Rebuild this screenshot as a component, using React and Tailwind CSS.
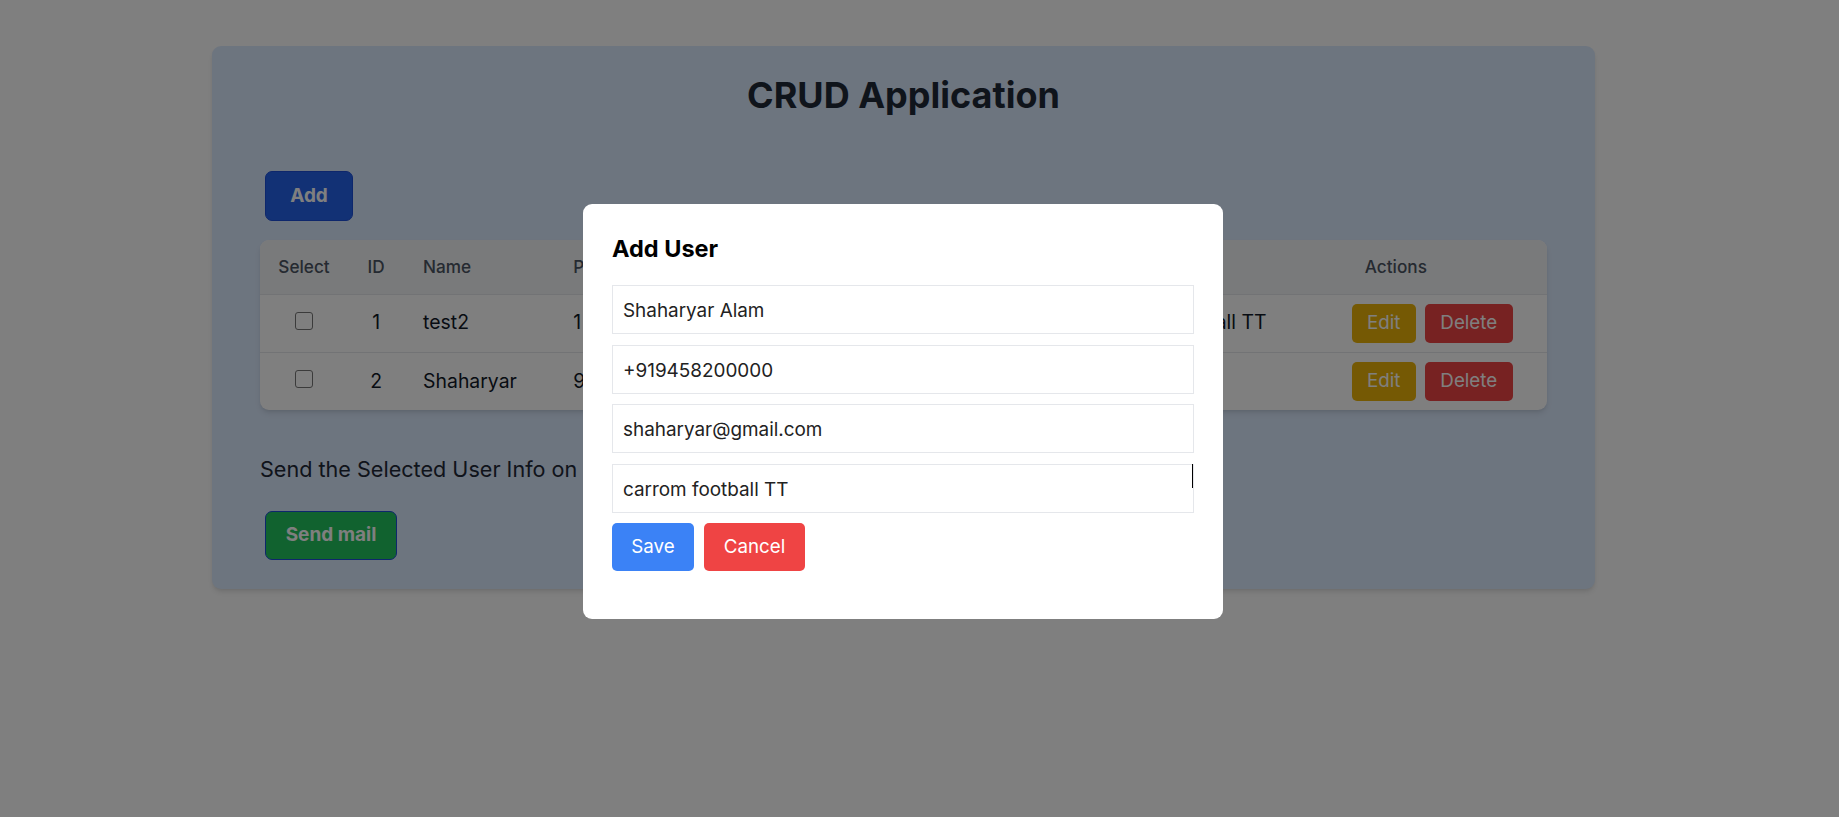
import React from "react";

const rows = [
  { id: 1, name: "test2", phone: "1 234567890", email: "test2@gmail.com", hobbies: "carrom football TT" },
  { id: 2, name: "Shaharyar", phone: "9458200000", email: "shaharyar@gmail.com", hobbies: "cricket" },
];

function Checkbox() {
  return <span className="inline-block w-[18px] h-[18px] rounded-[3px] border border-[#767676] bg-white align-middle -translate-y-[3px]"></span>;
}

export default function App() {
  return (
    <div className="min-h-[817px] bg-white text-[#1f2937]" style={{ fontFamily: "Inter, 'Noto Sans', sans-serif" }}>
      <div className="pt-[46px] pl-[212px]">
        <div className="w-[1383px] h-[543px] rounded-[9px] bg-[#dbeafe] shadow-md px-[48px] pt-[28px]">
          <h1 className="text-center text-[36px] leading-[42px] font-bold text-[#1f2937]">CRUD Application</h1>
          <div className="mt-[50px]">
            <button className="m-[5px] w-[88px] h-[50px] rounded-[7px] border border-[#1d4ed8] bg-[#2563eb] text-white font-bold text-[19px]">Add</button>
          </div>
          <div className="mt-[14px] rounded-[9px] shadow-md overflow-hidden bg-white">
            <table className="w-full table-fixed border-collapse">
              <thead>
                <tr className="bg-[#f3f4f6] h-[54px] text-[17.2px] font-medium text-[#4b5563]">
                  <th className="w-[88px] text-center font-medium">Select</th>
                  <th className="w-[56px] text-center font-medium">ID</th>
                  <th className="w-[150px] text-left pl-[19px] font-medium">Name</th>
                  <th className="w-[206px] text-left pl-[19px] font-medium">Phone</th>
                  <th className="w-[317px] text-left pl-[19px] font-medium">Email</th>
                  <th className="w-[255px] text-left pl-[19px] font-medium">Hobbies</th>
                  <th className="w-[214px] text-left pl-[32px] font-medium">Actions</th>
                </tr>
              </thead>
              <tbody className="text-[19.4px] text-[#111827]">
                {rows.map((r) => (
                  <tr key={r.id} className="h-[58px] border-t border-[#e5e7eb]">
                    <td className="text-center"><Checkbox /></td>
                    <td className="text-center">{r.id}</td>
                    <td className="pl-[19px]">{r.name}</td>
                    <td className="pl-[19px] whitespace-nowrap">{r.phone}</td>
                    <td className="pl-[19px]">{r.email}</td>
                    <td className="pl-[19px] whitespace-nowrap">{r.hobbies}</td>
                    <td className="pl-[19px]">
                      <div className="flex gap-[9px]">
                        <button className="w-[64px] h-[39px] rounded-[5px] bg-[#eab308] text-white text-[18.75px]">Edit</button>
                        <button className="w-[88px] h-[39px] rounded-[5px] bg-[#ef4444] text-white text-[18.75px]">Delete</button>
                      </div>
                    </td>
                  </tr>
                ))}
              </tbody>
            </table>
          </div>
          <p className="mt-[43px] text-[21.6px] leading-[33px] text-[#1f2937]">Send the Selected User Info on Email</p>
          <div className="mt-[20px]">
            <button className="m-[5px] w-[132px] h-[49px] rounded-[7px] border border-[#1d4ed8] bg-[#22c55e] text-white font-bold text-[19px]">Send mail</button>
          </div>
        </div>
      </div>

      <div className="fixed inset-0 bg-black/50 flex justify-center items-start pt-[204px] pr-[33px]">
        <div className="w-[640px] h-[415px] bg-white rounded-[9px] px-[29px] pt-[28px]">
          <h2 className="text-[23.5px] leading-[33px] font-bold text-black">Add User</h2>
          <div className="mt-[20px] flex flex-col gap-[10.7px]">
            {["Shaharyar Alam", "+919458200000", "shaharyar@gmail.com", "carrom football TT"].map((v, i) => (
              <div key={i} className="relative">
                <div className="h-[49px] w-full border border-[#e5e7eb] px-[10px] pt-[3px] flex items-center text-[18.9px] text-[#222]">{v}</div>
                {i === 3 && <span className="absolute right-[1px] top-0 w-[1.5px] h-[24px] bg-black"></span>}
              </div>
            ))}
          </div>
          <div className="mt-[9.7px] flex gap-[10px]">
            <button className="w-[82px] h-[48px] rounded-[5px] bg-[#3b82f6] text-white text-[18.75px]">Save</button>
            <button className="w-[101px] h-[48px] rounded-[5px] bg-[#ef4444] text-white text-[18.75px]">Cancel</button>
          </div>
        </div>
      </div>
    </div>
  );
}
